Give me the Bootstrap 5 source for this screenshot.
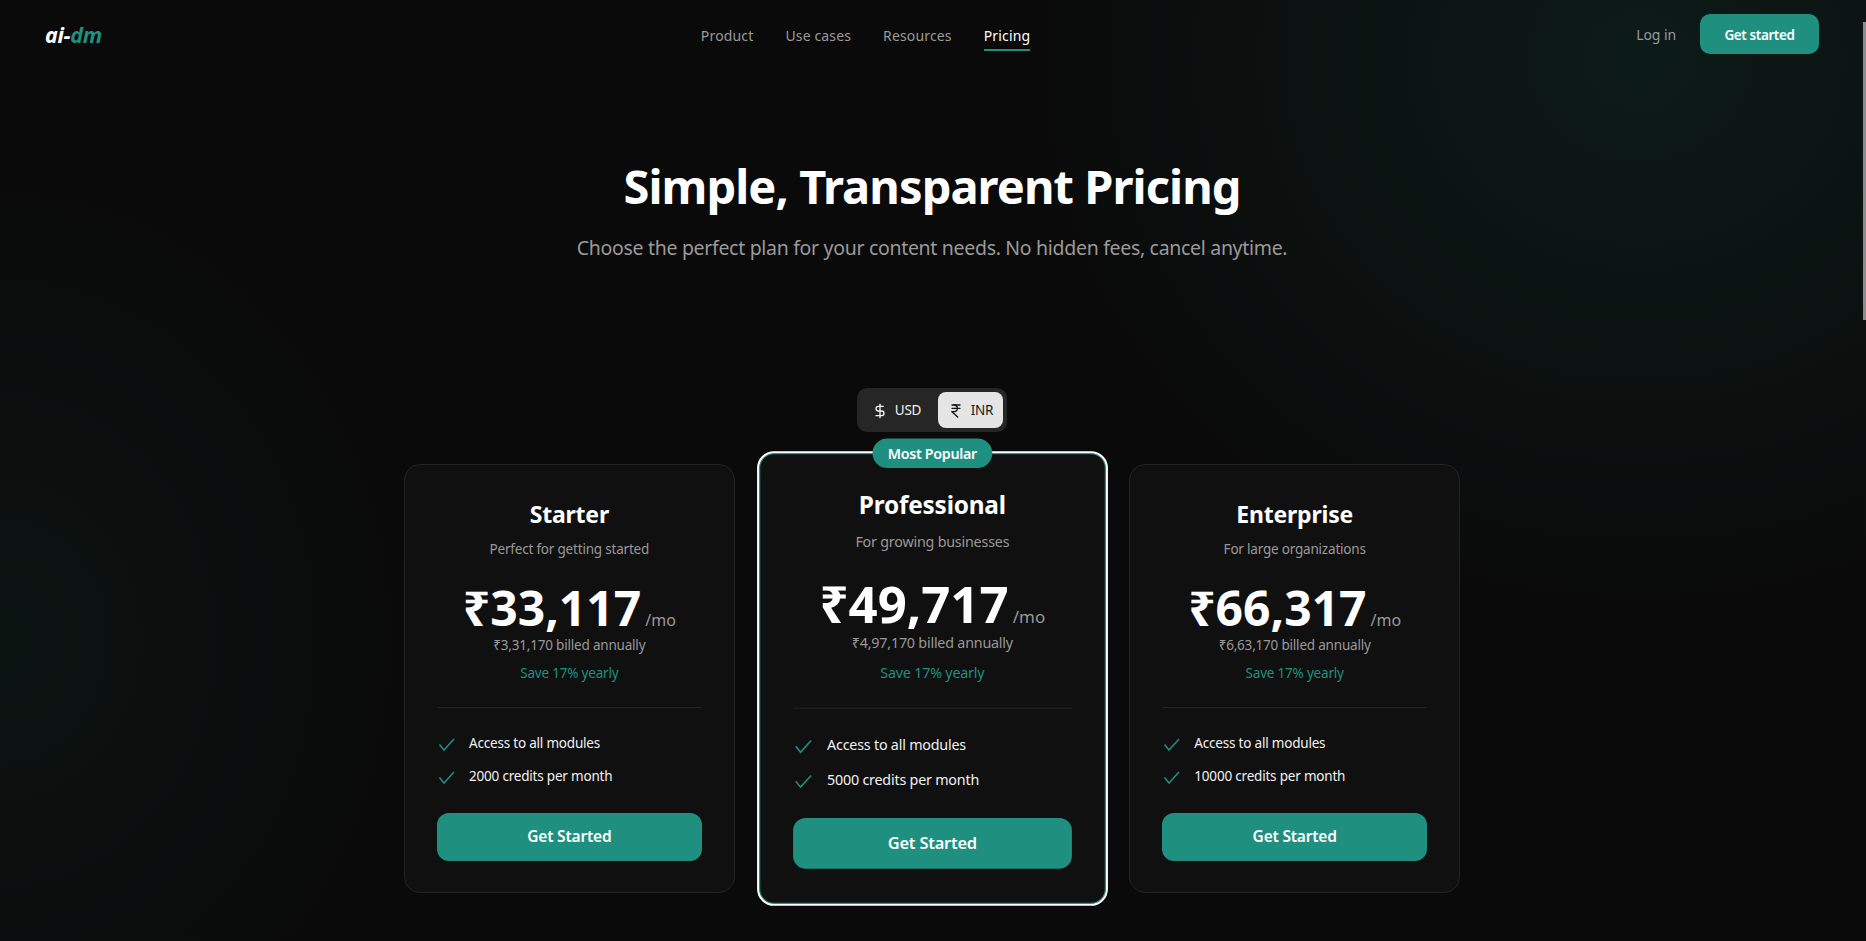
<!DOCTYPE html>
<html lang="en">
<head>
    <meta charset="UTF-8">
    <meta name="viewport" content="width=device-width, initial-scale=1.0">
    <title>Pricing - ai-dm</title>
    <link rel="stylesheet" href="https://cdn.jsdelivr.net/npm/bootstrap@5.3.0/dist/css/bootstrap.min.css">
    <style>
        html, body {
            height: 100%;
            overflow: hidden;
        }
        body {
            font-family: "Noto Sans", "Liberation Sans", sans-serif;
            color: #fff;
            background-color: #0a0a0a;
            background-image:
                radial-gradient(ellipse 620px 560px at 1640px 60px, rgba(20, 70, 60, 0.28), transparent 100%),
                radial-gradient(ellipse 420px 480px at 0px 640px, rgba(20, 70, 60, 0.16), transparent 100%);
            padding-right: 2px;
        }
        .fake-thumb {
            position: fixed;
            top: 22px;
            right: 0;
            width: 3px;
            height: 298px;
            background: #8c8c8c;
        }
        .top-nav {
            height: 68px;
            padding: 0 45px;
        }
        .logo {
            font-size: 21.5px;
            font-weight: 700;
            font-style: italic;
            color: #fff;
            text-decoration: none;
            letter-spacing: -0.3px;
            padding-top: 2px;
        }
        .logo span { color: #1f9080; }
        .nav-items { gap: 32px; margin: 4px 7px 0 0; }
        .nav-items a {
            font-size: 14px;
            color: #9a9a9a;
            text-decoration: none;
            letter-spacing: 0.15px;
            padding: 4px 0 3px;
            border-bottom: 2px solid transparent;
        }
        .nav-items a.on {
            color: #fff;
            border-bottom-color: #1f9080;
        }
        .login-link {
            font-size: 14px;
            color: #9a9a9a;
            text-decoration: none;
            letter-spacing: -0.1px;
        }
        .btn-teal {
            background: #1f9080;
            color: #fff;
            border: 0;
            font-weight: 600;
        }
        .btn-teal:hover { background: #1f9080; color: #fff; }
        .btn-nav {
            width: 119px;
            height: 40px;
            padding: 2px 0 0;
            font-size: 13.5px;
            letter-spacing: -0.4px;
            border-radius: 10px;
        }
        .hero {
            padding-top: 82px;
        }
        .hero h1 {
            font-size: 47px;
            font-weight: 700;
            letter-spacing: -0.93px;
            line-height: 72px;
            margin-bottom: 11px;
        }
        .hero p {
            font-size: 19.5px;
            letter-spacing: -0.31px;
            line-height: 30px;
            color: #9a9a9a;
            margin: 0;
        }
        .cur-toggle {
            margin-top: 125px;
            background: #262626;
            border-radius: 10px;
            padding: 4px;
            width: 150px;
            height: 44px;
        }
        .cur-btn {
            display: flex;
            align-items: center;
            justify-content: center;
            gap: 7px;
            height: 36px;
            width: 71px;
            padding-top: 1px;
            font-size: 13.5px;
            letter-spacing: -0.2px;
            color: #f2f2f2;
            border-radius: 8px;
        }
        .cur-btn.on {
            width: 65px;
            margin-left: auto;
            background: #e5e5e5;
            color: #171717;
        }
        .plans {
            grid-template-columns: repeat(3, 1fr);
            width: 1056px;
            margin: 32px auto 0;
            gap: 32px;
        }
        .plan-card {
            height: 429px;
            background: #101010;
            border: 1px solid #232323;
            border-radius: 16px;
            padding: 31px 32px 32px;
            color: #fff;
        }
        .plan-card.featured {
            transform: scale(1.06);
            border: 2px solid #fff;
            box-shadow: inset 0 0 0 1px #1f9080;
            padding: 30px 32px 31px;
        }
        .pop-badge {
            position: absolute;
            top: -14px;
            left: 50%;
            transform: translateX(-50%);
            background: #1f9080;
            color: #fff;
            font-size: 13.5px;
            font-weight: 600;
            letter-spacing: -0.3px;
            padding: 4px 14px;
            border-radius: 20px;
            white-space: nowrap;
        }
        .plan-name {
            font-size: 23px;
            font-weight: 700;
            letter-spacing: -0.2px;
            line-height: 36px;
            margin-bottom: 7px;
        }
        .plan-sub {
            font-size: 13.5px;
            letter-spacing: -0.2px;
            line-height: 21px;
            color: #999;
            margin-bottom: 33px;
        }
        .plan-price {
            font-size: 48px;
            font-weight: 700;
            line-height: 30px;
        }
        .plan-per {
            font-size: 16px;
            font-weight: 400;
            color: #999;
            margin-left: 4px;
        }
        .plan-billed {
            font-size: 13.5px;
            letter-spacing: -0.2px;
            line-height: 21px;
            color: #999;
        }
        .plan-save {
            font-size: 13.5px;
            letter-spacing: -0.2px;
            line-height: 21px;
            color: #1f9080;
            margin-top: 7px;
        }
        .plan-rule {
            height: 1px;
            background: #232323;
            margin: 23px 0 25px;
        }
        .featured .plan-rule { margin: 22px 0 24px; }
        .plan-feats {
            font-size: 13.5px;
            letter-spacing: -0.2px;
            color: #f0f0f0;
            gap: 10px;
            margin-bottom: 24px;
        }
        .featured .plan-feats { margin-bottom: 23px; }
        .plan-feats li { line-height: 21px; }
        .plan-feats svg { flex: none; margin-top: 3px; }
        .btn-plan {
            height: 48px;
            font-size: 15.5px;
            letter-spacing: -0.2px;
            border-radius: 12px;
        }
    </style>
</head>
<body>
    <nav class="top-nav d-flex align-items-center justify-content-between">
        <a class="logo" href="#">ai-<span>dm</span></a>
        <div class="nav-items d-flex align-items-center">
            <a href="#">Product</a>
            <a href="#">Use cases</a>
            <a href="#">Resources</a>
            <a href="#" class="on">Pricing</a>
        </div>
        <div class="d-flex align-items-center gap-4">
            <a class="login-link" href="#">Log in</a>
            <button class="btn btn-teal btn-nav">Get started</button>
        </div>
    </nav>

    <section class="hero text-center">
        <h1>Simple, Transparent Pricing</h1>
        <p>Choose the perfect plan for your content needs. No hidden fees, cancel anytime.</p>
        <div class="cur-toggle d-flex mx-auto">
            <div class="cur-btn"><svg width="16" height="16" viewBox="0 0 24 24" fill="none" stroke="currentColor" stroke-width="2" stroke-linecap="round" stroke-linejoin="round"><path d="M12 2v20"/><path d="M17 5H9.5a3.5 3.5 0 0 0 0 7h5a3.5 3.5 0 0 1 0 7H6"/></svg>USD</div>
            <div class="cur-btn on"><svg width="16" height="16" viewBox="0 0 24 24" fill="none" stroke="currentColor" stroke-width="2" stroke-linecap="round" stroke-linejoin="round"><path d="M6 3h12"/><path d="M6 8h12"/><path d="m6 13 8.5 8"/><path d="M6 13h3"/><path d="M9 13c6.667 0 6.667-10 0-10"/></svg>INR</div>
        </div>
    </section>

    <div class="plans d-grid">
        <div class="plan-card text-center" id="plan-starter">
            <div class="plan-name">Starter</div>
            <div class="plan-sub">Perfect for getting started</div>
            <div class="plan-price">₹33,117<span class="plan-per">/mo</span></div>
            <div class="plan-billed">₹3,31,170 billed annually</div>
            <div class="plan-save">Save 17% yearly</div>
            <div class="plan-rule"></div>
            <ul class="plan-feats list-unstyled d-flex flex-column text-start">
                <li class="d-flex gap-2"><svg width="20" height="20" viewBox="0 0 20 20" fill="none" stroke="#1f9080" stroke-width="1.5"><path d="M2.5 8.5 7 14 17 3"/></svg><span class="ms-1">Access to all modules</span></li>
                <li class="d-flex gap-2"><svg width="20" height="20" viewBox="0 0 20 20" fill="none" stroke="#1f9080" stroke-width="1.5"><path d="M2.5 8.5 7 14 17 3"/></svg><span class="ms-1">2000 credits per month</span></li>
            </ul>
            <button class="btn btn-teal btn-plan w-100">Get Started</button>
        </div>
        <div class="plan-card featured text-center position-relative" id="plan-pro">
            <div class="pop-badge">Most Popular</div>
            <div class="plan-name">Professional</div>
            <div class="plan-sub">For growing businesses</div>
            <div class="plan-price">₹49,717<span class="plan-per">/mo</span></div>
            <div class="plan-billed">₹4,97,170 billed annually</div>
            <div class="plan-save">Save 17% yearly</div>
            <div class="plan-rule"></div>
            <ul class="plan-feats list-unstyled d-flex flex-column text-start">
                <li class="d-flex gap-2"><svg width="20" height="20" viewBox="0 0 20 20" fill="none" stroke="#1f9080" stroke-width="1.5"><path d="M2.5 8.5 7 14 17 3"/></svg><span class="ms-1">Access to all modules</span></li>
                <li class="d-flex gap-2"><svg width="20" height="20" viewBox="0 0 20 20" fill="none" stroke="#1f9080" stroke-width="1.5"><path d="M2.5 8.5 7 14 17 3"/></svg><span class="ms-1">5000 credits per month</span></li>
            </ul>
            <button class="btn btn-teal btn-plan w-100">Get Started</button>
        </div>
        <div class="plan-card text-center" id="plan-ent">
            <div class="plan-name">Enterprise</div>
            <div class="plan-sub">For large organizations</div>
            <div class="plan-price">₹66,317<span class="plan-per">/mo</span></div>
            <div class="plan-billed">₹6,63,170 billed annually</div>
            <div class="plan-save">Save 17% yearly</div>
            <div class="plan-rule"></div>
            <ul class="plan-feats list-unstyled d-flex flex-column text-start">
                <li class="d-flex gap-2"><svg width="20" height="20" viewBox="0 0 20 20" fill="none" stroke="#1f9080" stroke-width="1.5"><path d="M2.5 8.5 7 14 17 3"/></svg><span class="ms-1">Access to all modules</span></li>
                <li class="d-flex gap-2"><svg width="20" height="20" viewBox="0 0 20 20" fill="none" stroke="#1f9080" stroke-width="1.5"><path d="M2.5 8.5 7 14 17 3"/></svg><span class="ms-1">10000 credits per month</span></li>
            </ul>
            <button class="btn btn-teal btn-plan w-100">Get Started</button>
        </div>
    </div>

    <div class="fake-thumb"></div>

    <script src="https://cdn.jsdelivr.net/npm/bootstrap@5.3.0/dist/js/bootstrap.bundle.min.js"></script>
</body>
</html>
